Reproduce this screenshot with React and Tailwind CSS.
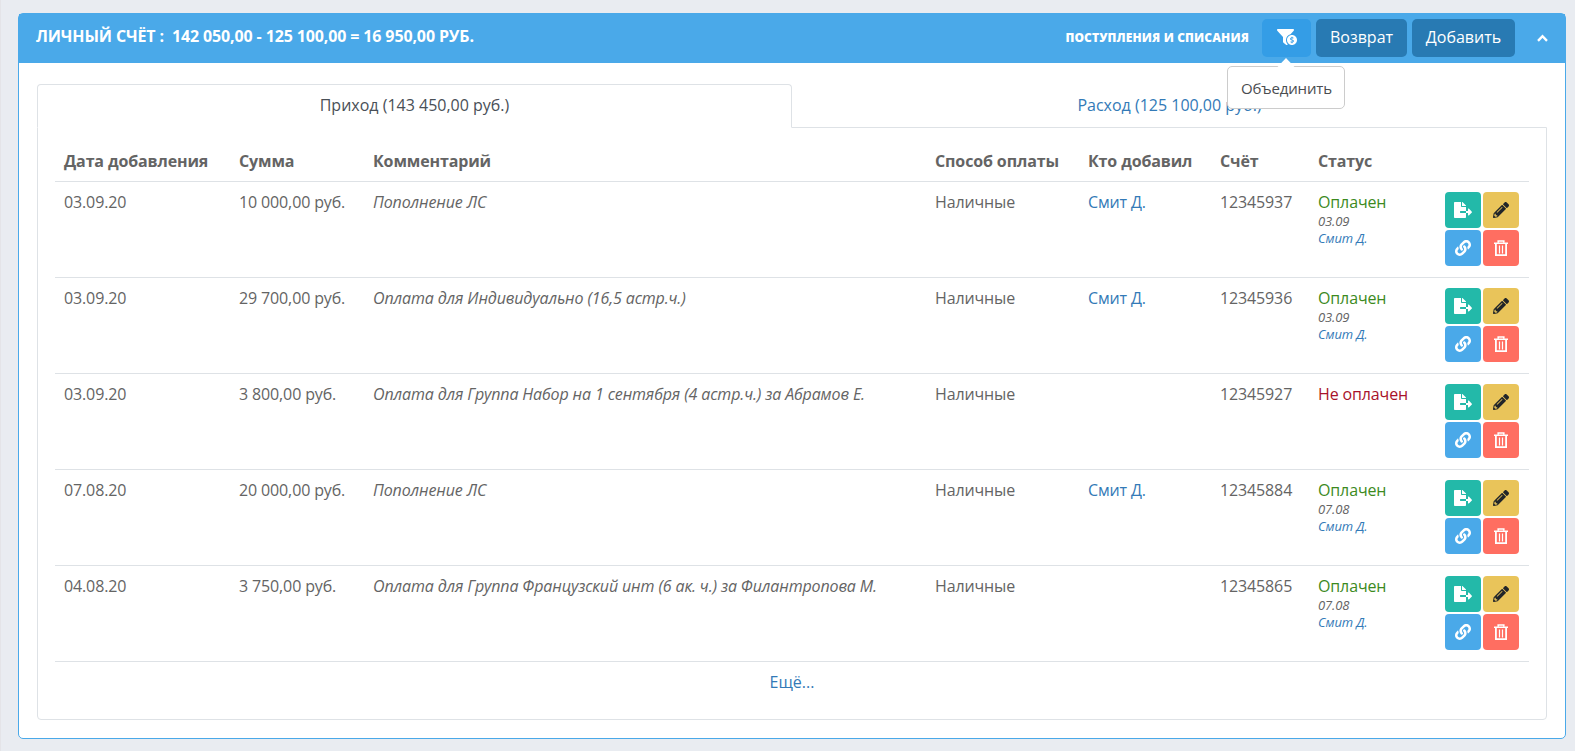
import React, { useState } from 'react';
import { FaFileExport, FaFunnelDollar, FaLink, FaPencilAlt } from 'react-icons/fa';

const payments = [
  { id: 12345937, date: '03.09.20', sum: '10 000,00 руб.', comment: 'Пополнение ЛС', method: 'Наличные', addedBy: 'Смит Д.', paid: '03.09' },
  { id: 12345936, date: '03.09.20', sum: '29 700,00 руб.', comment: 'Оплата для Индивидуально (16,5 астр.ч.)', method: 'Наличные', addedBy: 'Смит Д.', paid: '03.09' },
  { id: 12345927, date: '03.09.20', sum: '3 800,00 руб.', comment: 'Оплата для Группа Набор на 1 сентября (4 астр.ч.) за Абрамов Е.', method: 'Наличные', addedBy: '', paid: null },
  { id: 12345884, date: '07.08.20', sum: '20 000,00 руб.', comment: 'Пополнение ЛС', method: 'Наличные', addedBy: 'Смит Д.', paid: '07.08' },
  { id: 12345865, date: '04.08.20', sum: '3 750,00 руб.', comment: 'Оплата для Группа Французский инт (6 ак. ч.) за Филантропова М.', method: 'Наличные', addedBy: '', paid: '07.08' },
];

const TrashIcon = () => (
  <svg width="14" height="16" viewBox="0 0 14 16" fill="none" stroke="currentColor">
    <path d="M0 3.25h14" strokeWidth="1.5" />
    <path d="M4.2 2.8V1h5.6v1.8" strokeWidth="1.6" />
    <path d="M1.9 3.5v11.6h10.2V3.5" strokeWidth="1.8" />
    <path d="M5.5 5.5v8M8.5 5.5v8" strokeWidth="1.2" />
  </svg>
);

const Actions = () => (
  <div className="grid w-[74px] grid-cols-2 gap-0.5">
    <button className="flex h-9 w-9 items-center justify-center rounded bg-[#23b9a9] text-white">
      <FaFileExport size={18} />
    </button>
    <button className="flex h-9 w-9 items-center justify-center rounded bg-[#e9c45a] text-[#212529]">
      <FaPencilAlt size={16} />
    </button>
    <button className="flex h-9 w-9 items-center justify-center rounded bg-[#4aa9e9] text-white">
      <FaLink size={16} />
    </button>
    <button className="flex h-9 w-9 items-center justify-center rounded bg-[#ff6e61] text-white">
      <TrashIcon />
    </button>
  </div>
);

const App = () => {
  const [tab, setTab] = useState('income');

  const tabClass = (name) =>
    name === tab
      ? 'rounded-t border-[#dee2e6] border-b-white bg-white text-[#495057]'
      : 'border-transparent text-[#337ab7]';

  return (
    <div className="h-[751px] overflow-hidden border-l border-[#e4e4e8] bg-[#e9ecf1] pt-[13px] pr-[9px] pl-[17px] font-['Open_Sans',sans-serif] text-base text-[#646464]">
      <div className="h-[726px] rounded-[5px] border border-[#4aa9e9] bg-white">
        <div className="flex h-[49px] items-center bg-[#4aa9e9] pr-[17px] pb-0.5 pl-[17px] text-white">
          <h2 className="pb-1 font-bold tracking-[-0.13px] whitespace-pre">ЛИЧНЫЙ СЧЁТ :  142 050,00 - 125 100,00 = 16 950,00 РУБ.</h2>
          <span className="ml-auto text-xs font-extrabold tracking-[0.13px]">ПОСТУПЛЕНИЯ И СПИСАНИЯ</span>
          <div className="relative ml-[13px]">
            <button className="flex h-[38px] w-[49px] items-center justify-center rounded-[5px] bg-[#349de6] pb-px pl-px">
              <FaFunnelDollar size={20} />
            </button>
            <div className="absolute top-[47px] left-1/2 z-10 flex h-[43px] w-[118px] -translate-x-[60px] items-center justify-center rounded-[5px] border border-[#cccccc] bg-white pt-0.5 pl-0.5 text-[15px] tracking-[-0.15px] text-[#4a4d50]">
              <svg className="absolute -top-[9px] left-[49px]" width="18" height="10" viewBox="0 0 18 10">
                <path d="M0 9.5L9 0L18 9.5V10H0z" fill="#fff" />
              </svg>
              Объединить
            </div>
          </div>
          <button className="ml-[5px] h-[38px] w-[91px] rounded-[5px] bg-[#287ab3] pb-0.5">Возврат</button>
          <button className="ml-[5px] h-[38px] w-[103px] rounded-[5px] bg-[#287ab3] pb-0.5">Добавить</button>
          <svg className="ml-[22px]" width="11" height="8" viewBox="0 0 11 8" fill="none" stroke="currentColor" strokeWidth="2.4">
            <path d="M1 6.8L5.5 2.2L10 6.8" />
          </svg>
        </div>

        <div className="px-[18px] pt-[21px]">
          <div className="grid grid-cols-2">
            <button onClick={() => setTab('income')} className={`relative z-[1] -mb-px h-[44px] border pb-0.5 font-medium ${tabClass('income')}`}>
              Приход (143 450,00 руб.)
            </button>
            <button onClick={() => setTab('expense')} className={`-mb-px h-[44px] border pb-0.5 font-medium ${tabClass('expense')}`}>
              Расход (125 100,00 руб.)
            </button>
          </div>

          <div className="h-[593px] rounded-b border border-[#dee2e6] px-[17px] pt-[13px]">
            <table className="w-full table-fixed border-collapse text-left tracking-[-0.13px]">
              <colgroup>
                <col className="w-[175px]" />
                <col className="w-[134px]" />
                <col className="w-[562px]" />
                <col className="w-[153px]" />
                <col className="w-[132px]" />
                <col className="w-[98px]" />
                <col className="w-[127px]" />
                <col />
              </colgroup>
              <thead>
                <tr className="h-[40px] border-b border-[#dee2e6]">
                  <th className="px-[9px] font-bold">Дата добавления</th>
                  <th className="px-[9px] font-bold">Сумма</th>
                  <th className="px-[9px] font-bold">Комментарий</th>
                  <th className="px-[9px] font-bold">Способ оплаты</th>
                  <th className="px-[9px] font-bold">Кто добавил</th>
                  <th className="px-[9px] font-bold">Счёт</th>
                  <th className="px-[9px] font-bold">Статус</th>
                  <th />
                </tr>
              </thead>
              <tbody>
                {payments.map((item) => (
                  <tr key={item.id} className="h-24 border-b border-[#dee2e6] align-top whitespace-nowrap">
                    <td className="px-[9px] pt-2">{item.date}</td>
                    <td className="px-[9px] pt-2">{item.sum}</td>
                    <td className="px-[9px] pt-2 italic">{item.comment}</td>
                    <td className="px-[9px] pt-2">{item.method}</td>
                    <td className="px-[9px] pt-2 text-[#337ab7]">{item.addedBy}</td>
                    <td className="px-[9px] pt-2">{item.id}</td>
                    <td className="px-[9px] pt-2">
                      {item.paid ? (
                        <>
                          <div className="text-[#3c8a1e]">Оплачен</div>
                          <div className="-mt-px text-[13px] leading-[17px] italic">
                            <div>{item.paid}</div>
                            <div className="text-[#337ab7]">Смит Д.</div>
                          </div>
                        </>
                      ) : (
                        <div className="text-[#a8122a]">Не оплачен</div>
                      )}
                    </td>
                    <td className="pt-2.5 pl-[9px]">
                      <Actions />
                    </td>
                  </tr>
                ))}
              </tbody>
            </table>
            <div className="pt-2 text-center">
              <a href="#" className="text-[#337ab7]">Ещё...</a>
            </div>
          </div>
        </div>
      </div>
    </div>
  );
};

export default App;
